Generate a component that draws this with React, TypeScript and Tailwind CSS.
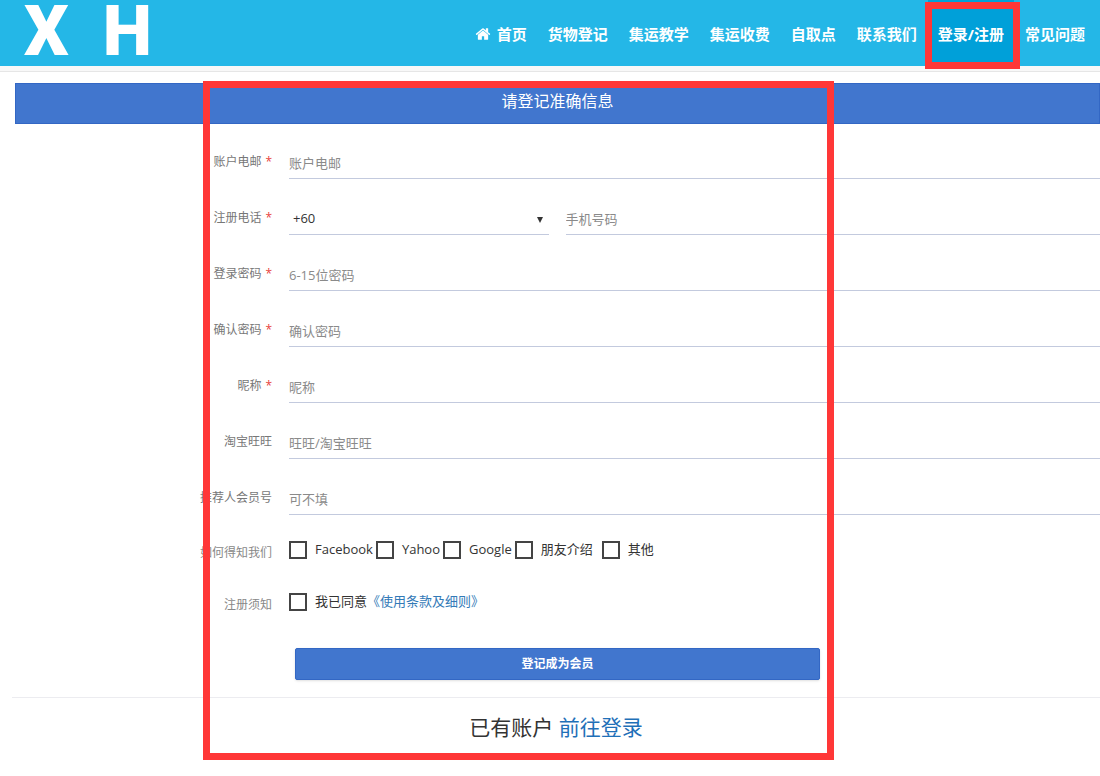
const navItems = [
  { label: "首页", home: true },
  { label: "货物登记" },
  { label: "集运教学" },
  { label: "集运收费" },
  { label: "自取点" },
  { label: "联系我们" },
  { label: "登录/注册", active: true },
  { label: "常见问题" },
];

const sources = ["Facebook", "Yahoo", "Google", "朋友介绍", "其他"];

const lineClass =
  "h-[34px] w-full min-w-0 border-b border-[#c3cade] bg-transparent pt-0.5 text-[13px] text-[#333] outline-none placeholder:text-[#8a8a8a]";

const boxClass =
  "size-[18px] shrink-0 appearance-none border-2 border-[#444] bg-white checked:bg-[#4176ce]";

function HomeIcon() {
  return (
    <svg viewBox="0 0 1792 1792" aria-hidden="true" className="size-4 fill-current">
      <path d="M1472 992v480q0 26-19 45t-45 19h-384v-384h-256v384h-384q-26 0-45-19t-19-45v-480q0-1 .5-3t.5-3l575-474 575 474q1 2 1 6zm223-69l-62 74q-8 9-21 11h-3q-13 0-21-7l-692-577-692 577q-12 8-24 7-13-2-21-11l-62-74q-8-10-7-23.500t11-21.500l719-599q32-26 76-26t76 26l244 204v-195q0-14 9-23t23-9h192q14 0 23 9t9 23v408l219 182q10 8 11 21.500t-7 23.500z" />
    </svg>
  );
}

function FieldLabel({ id, text, required }: { id: string; text: string; required?: boolean }) {
  return (
    <label htmlFor={id} className="flex w-[257px] shrink-0 justify-end gap-1 text-xs text-[#777]">
      {text}
      {required && <span className="text-[#e8413c]">*</span>}
    </label>
  );
}

function Field(props: {
  id: string;
  label: string;
  placeholder: string;
  type?: string;
  required?: boolean;
}) {
  return (
    <div className="flex items-center gap-[17px]">
      <FieldLabel id={props.id} text={props.label} required={props.required} />
      <input id={props.id} type={props.type ?? "text"} placeholder={props.placeholder} className={lineClass} />
    </div>
  );
}

export default function App() {
  return (
    <div className="min-h-screen bg-white font-['Open_Sans','Noto_Sans_CJK_SC',sans-serif] text-[#333]">
      <header className="border-b border-[#e6e6e6] bg-[#f8f8f8] pb-[5px]">
        <div className="flex h-[66px] items-center justify-between bg-[#24b7e7] pr-[5px] pl-6">
          <a
            href="#"
            className="flex gap-[34px] pb-1 font-[Roboto,sans-serif] text-[70px] leading-none font-black text-white"
          >
            <span>X</span>
            <span>H</span>
          </a>
          <nav className="flex h-full gap-px text-[15px] font-bold text-white">
            {navItems.map((item) => (
              <a
                key={item.label}
                href="#"
                className={
                  item.active
                    ? "relative flex items-center bg-[#00a0d9] px-[10px] pt-0.5 whitespace-nowrap"
                    : "flex items-center gap-1.5 px-[10px] pt-0.5 whitespace-nowrap"
                }
              >
                {item.home && <HomeIcon />}
                {item.label}
                {item.active && (
                  <span className="absolute top-0.5 -right-1.5 -bottom-[3px] -left-[3px] z-10 border-[7px] border-[#ff3737]" />
                )}
              </a>
            ))}
          </nav>
        </div>
      </header>

      <main className="relative pt-[11px] pb-[19px]">
        <div className="pl-[15px]">
          <h1 className="flex h-[41px] items-center justify-center border border-[#3367c4] bg-[#4176ce] pb-1.5 text-base text-white">
            请登记准确信息
          </h1>

          <form className="pt-[21px]" onSubmit={(e) => e.preventDefault()}>
            <div className="flex flex-col gap-[22px]">
              <Field id="email" label="账户电邮" placeholder="账户电邮" type="email" required />
              <div className="flex items-center gap-[17px]">
                <FieldLabel id="code" text="注册电话" required />
                <div className="flex flex-1 gap-[17px]">
                  <div className="relative w-[32%]">
                    <select
                      id="code"
                      className="h-[34px] w-full appearance-none border-b border-[#c3cade] bg-transparent px-1 pt-0.5 text-[13px] text-[#333] outline-none"
                    >
                      <option>+60</option>
                    </select>
                    <svg viewBox="0 0 6 6" className="pointer-events-none absolute top-4 right-1.5 size-1.5 fill-[#333]">
                      <path d="M0 0h6L3 6z" />
                    </svg>
                  </div>
                  <div className="flex-1">
                    <input aria-label="手机号码" type="tel" placeholder="手机号码" className={lineClass} />
                  </div>
                </div>
              </div>
              <Field id="password" label="登录密码" placeholder="6-15位密码" type="password" required />
              <Field id="confirm" label="确认密码" placeholder="确认密码" type="password" required />
              <Field id="nickname" label="昵称" placeholder="昵称" required />
              <Field id="wangwang" label="淘宝旺旺" placeholder="旺旺/淘宝旺旺" />
              <Field id="referrer" label="推荐人会员号" placeholder="可不填" />
            </div>

            <div role="group" aria-labelledby="sources" className="mt-6 flex gap-[17px]">
              <span id="sources" className="w-[257px] shrink-0 pt-1 text-right text-xs leading-5 text-[#888]">
                如何得知我们
              </span>
              <div className="flex gap-[3px] text-[13px] leading-5">
                {sources.map((name) => (
                  <label
                    key={name}
                    className={name === "朋友介绍" ? "flex h-5 gap-2 pr-1.5" : "flex h-5 gap-2"}
                  >
                    <input type="checkbox" className={`${boxClass} mt-0.5`} />
                    {name}
                  </label>
                ))}
              </div>
            </div>

            <div className="mt-7 flex gap-[17px]">
              <span className="w-[257px] shrink-0 pt-1 text-right text-xs leading-5 text-[#888]">注册须知</span>
              <div className="flex gap-2 text-[13px] leading-5">
                <input id="agree" type="checkbox" className={`${boxClass} mt-0.5`} />
                <span>
                  <label htmlFor="agree">我已同意</label>
                  <a href="#" className="text-[#337ab7]">《使用条款及细则》</a>
                </span>
              </div>
            </div>

            <button
              type="submit"
              className="mx-auto mt-[33px] block h-8 w-full max-w-[525px] rounded-xs border border-[#3367c4] bg-[#4176ce] text-xs font-bold text-white shadow-sm"
            >
              登记成为会员
            </button>
          </form>
        </div>

        <div className="mt-[17px] ml-3 border-t border-[#ececf0] pt-[15px] text-center text-[21px] leading-7">
          已有账户 <a href="#" className="text-[#1f70b8]">前往登录</a>
        </div>

        <div className="pointer-events-none absolute top-[9px] bottom-0 left-[203px] w-[631px] border-[7px] border-[#ff3737]" />
      </main>
    </div>
  );
}
